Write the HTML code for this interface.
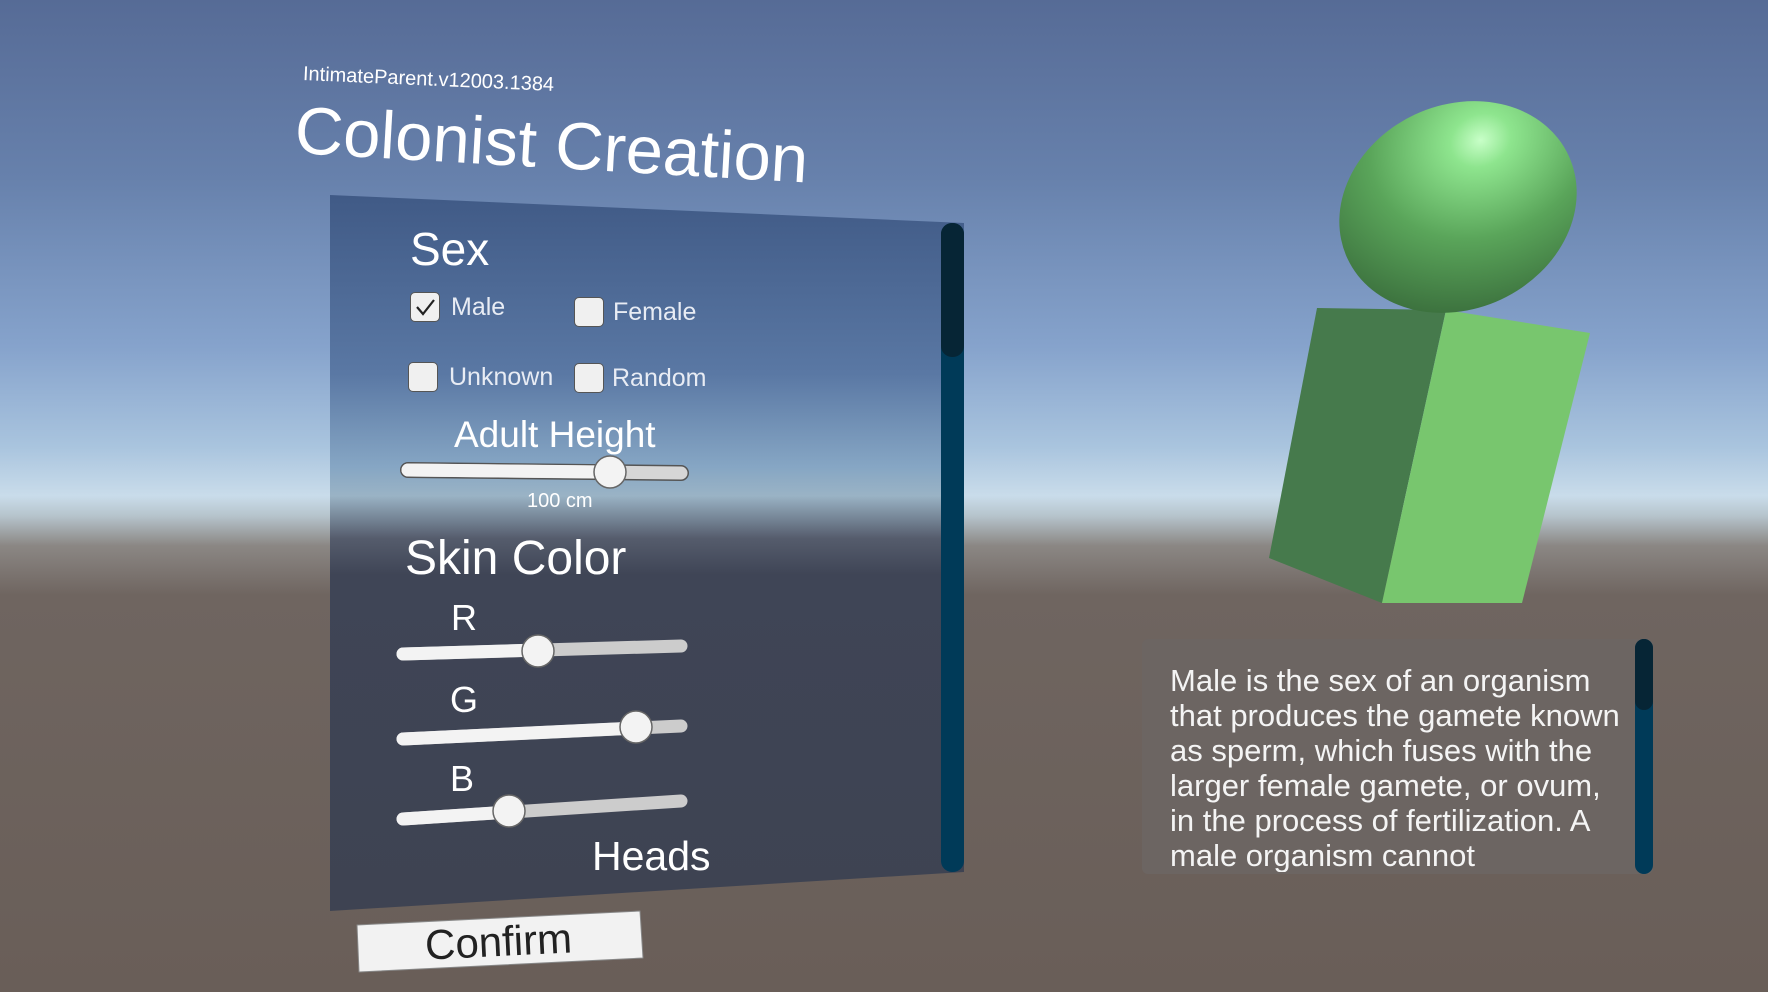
<!DOCTYPE html>
<html><head><meta charset="utf-8"><style>
body{margin:0;width:1768px;height:992px;overflow:hidden;position:relative;font-family:"Liberation Sans",sans-serif;
background:linear-gradient(180deg,#566b96 0%,#6781ac 18%,#86a3cc 35%,#a9c4de 45%,#c9dcea 50%,#b6c4cc 52%,#8b8784 55%,#6f6560 60%,#695e58 100%);}
.t{position:absolute;color:#fff;white-space:nowrap;line-height:1}
.cb{position:absolute;width:30px;height:30px;background:#f0f0f0;border:1px solid #555;border-radius:5px;box-sizing:border-box}
</style></head><body>
<svg width="1768" height="992" style="position:absolute;left:0;top:0">
<defs>
<linearGradient id="pg" x1="0" y1="195" x2="0" y2="911" gradientUnits="userSpaceOnUse">
<stop offset="0" stop-color="#405a86"/>
<stop offset="0.25" stop-color="#5a78a4"/>
<stop offset="0.38" stop-color="#86a6c4"/>
<stop offset="0.42" stop-color="#9ab3c5"/>
<stop offset="0.48" stop-color="#555c6c"/>
<stop offset="0.53" stop-color="#3f4556"/>
<stop offset="1" stop-color="#3e4352"/>
</linearGradient>
<radialGradient id="ball" cx="0.7" cy="0.25" r="0.85">
<stop offset="0" stop-color="#c8ffc8"/><stop offset="0.15" stop-color="#8ee58e"/>
<stop offset="0.55" stop-color="#5aa55a"/><stop offset="1" stop-color="#3a6e3c"/>
</radialGradient>
</defs>
<polygon points="330,195 964,223 964,872 330,911" fill="url(#pg)"/>
<rect x="941" y="223" width="23" height="649" rx="11" fill="#003a58"/>
<rect x="941" y="223" width="23" height="134" rx="11" fill="#062535"/>
<line x1="408" y1="470" x2="681" y2="473" stroke="#555" stroke-width="16" stroke-linecap="round"/>
<line x1="408" y1="470" x2="681" y2="473" stroke="#d6d6d6" stroke-width="13" stroke-linecap="round"/>
<line x1="408" y1="470" x2="610" y2="472" stroke="#f3f3f3" stroke-width="13" stroke-linecap="round"/>
<circle cx="610" cy="472" r="16" fill="#f3f3f3" stroke="#666" stroke-width="1.5"/>
<g stroke-linecap="round">
<line x1="403" y1="654" x2="681" y2="646" stroke="#ccc" stroke-width="13"/>
<line x1="403" y1="654" x2="538" y2="650" stroke="#f3f3f3" stroke-width="13"/>
<line x1="403" y1="739" x2="681" y2="726" stroke="#ccc" stroke-width="13"/>
<line x1="403" y1="739" x2="636" y2="728" stroke="#f3f3f3" stroke-width="13"/>
<line x1="403" y1="819" x2="681" y2="801" stroke="#ccc" stroke-width="13"/>
<line x1="403" y1="819" x2="509" y2="812" stroke="#f3f3f3" stroke-width="13"/>
</g>
<circle cx="538" cy="651" r="16" fill="#f3f3f3" stroke="#666" stroke-width="1.5"/>
<circle cx="636" cy="727" r="16" fill="#f3f3f3" stroke="#666" stroke-width="1.5"/>
<circle cx="509" cy="811" r="16" fill="#f3f3f3" stroke="#666" stroke-width="1.5"/>
<polygon points="357,925 640,911 643,958 359,972" fill="#f2f2f2" stroke="#888" stroke-width="1" stroke-linejoin="round"/>
<rect x="1142" y="639" width="511" height="235" rx="6" fill="#6c6562"/>
<rect x="1635" y="639" width="18" height="235" rx="9" fill="#003a58"/>
<rect x="1635" y="639" width="18" height="71" rx="9" fill="#062535"/>
<polygon points="1317,308 1446,310 1382,603 1269,558" fill="#467a4c"/>
<polygon points="1446,310 1590,333 1522,603 1382,603" fill="#78c66e"/>
<ellipse cx="1458" cy="207" rx="122" ry="102" transform="rotate(-25 1458 207)" fill="url(#ball)"/>
</svg>
<div class="t" style="left:303px;top:64px;font-size:20px;transform:rotate(2.5deg);transform-origin:left">IntimateParent.v12003.1384</div>
<div class="t" style="left:297px;top:97px;font-size:67px;transform:rotate(3.3deg);transform-origin:left top">Colonist Creation</div>
<div class="t" style="left:410px;top:226px;font-size:46px">Sex</div>
<div class="cb" style="left:410px;top:292px"><svg width="28" height="28" style="position:absolute;left:0;top:0"><path d="M6 14 L12 21 L23 7" fill="none" stroke="#222" stroke-width="2.2"/></svg></div>
<div class="t" style="left:451px;top:295px;font-size:25px;color:#e8ecf4">Male</div>
<div class="cb" style="left:574px;top:297px"></div>
<div class="t" style="left:613px;top:300px;font-size:25px;color:#e8ecf4">Female</div>
<div class="cb" style="left:408px;top:362px"></div>
<div class="t" style="left:449px;top:365px;font-size:25px;color:#e8ecf4">Unknown</div>
<div class="cb" style="left:574px;top:363px"></div>
<div class="t" style="left:612px;top:366px;font-size:25px;color:#e8ecf4">Random</div>
<div class="t" style="left:454px;top:416px;font-size:37px">Adult Height</div>
<div class="t" style="left:527px;top:491px;font-size:20px">100 cm</div>
<div class="t" style="left:405px;top:535px;font-size:48px">Skin Color</div>
<div class="t" style="left:451px;top:600px;font-size:36px">R</div>
<div class="t" style="left:450px;top:682px;font-size:36px">G</div>
<div class="t" style="left:450px;top:761px;font-size:36px">B</div>
<div class="t" style="left:592px;top:836px;font-size:41px">Heads</div>
<div class="t" style="left:425px;top:921px;font-size:42px;color:#222;transform:rotate(-2.8deg)">Confirm</div>
<div style="position:absolute;left:1142px;top:655px;width:480px;height:217px;overflow:hidden">
<div class="t" style="left:28px;top:8px;font-size:31px;line-height:35px;white-space:normal;width:455px;color:#f4f4f4">Male is the sex of an organism that produces the gamete known as sperm, which fuses with the larger female gamete, or ovum, in the process of fertilization. A male organism cannot</div>
</div>
</body></html>
